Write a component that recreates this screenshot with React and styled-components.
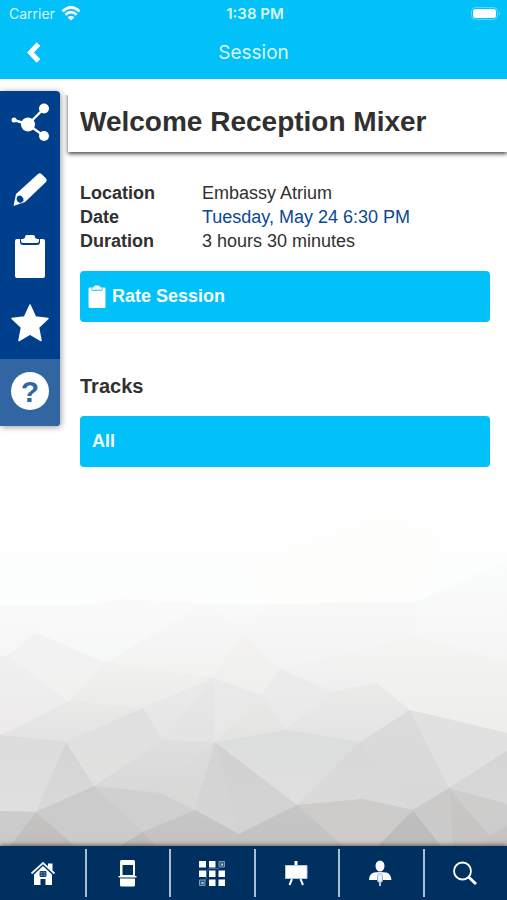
import styled, { createGlobalStyle } from "styled-components";

const DETAILS = [
  { label: "Location", value: "Embassy Atrium" },
  { label: "Date", value: "Tuesday, May 24 6:30 PM", href: "#schedule" },
  { label: "Duration", value: "3 hours 30 minutes" },
];

// [points, top colour, bottom colour]
const FACETS = [
  ["0,480 507,480 507,610 0,610", "#ffffff", "#fcfdfd"],
  ["0,605 507,605 507,846 0,846", "#f9f9f9", "#c8c8c8"],
  ["250,570 385,508 440,535 415,602 325,606 270,604", "#fefefd", "#fdfdfb"],
  ["0,611 60,611 36,633 8,655 0,661", "#faf9f9", "#f6f6f6"],
  ["60,611 120,599 205,603 106,663 36,633", "#fafafa", "#f6f7f7"],
  ["36,633 106,663 68,702 15,661 8,655", "#f3f3f3", "#f1f1f0"],
  ["205,603 243,633 213,678 106,663", "#f8f8f8", "#f2f2f1"],
  ["205,603 270,604 243,633", "#fafafa", "#f6f6f6"],
  ["270,604 415,602 415,637 332,657 280,669 243,633", "#f8f8f8", "#f3f3f3"],
  ["415,602 507,560 507,662 415,637", "#fbfcfc", "#f5f5f5"],
  ["415,637 507,662 507,733 410,710 376,683 332,657", "#f4f4f3", "#eeeeed"],
  ["415,657 507,700 507,733 410,710", "#f3f3f2", "#ededeb"],
  ["243,633 280,669 262,695 213,678", "#f4f3f2", "#efefee"],
  ["280,669 332,657 376,683 332,692", "#f3f3f2", "#efeff0"],
  ["0,655 15,661 68,702 0,736", "#f1f0f0", "#eceaeb"],
  ["106,663 213,678 143,708 68,702", "#f1f1f0", "#ebebea"],
  ["0,735 68,702 143,708 66,742", "#e9e9e8", "#e3e3e3"],
  ["143,708 213,678 163,740", "#ebeaea", "#e6e5e6"],
  ["213,678 215,742 163,740", "#e8e7e7", "#e4e3e4"],
  ["213,678 262,695 215,742", "#ebeaea", "#e7e7e6"],
  ["262,695 286,730 215,742", "#e9e9e8", "#e3e3e2"],
  ["280,669 332,692 286,730 262,695", "#ececec", "#eae9ea"],
  ["332,692 376,683 410,710 360,742 286,730", "#ebebea", "#e3e3e3"],
  ["0,735 66,742 36,812 0,811", "#dbdcdb", "#dfdfdf"],
  ["66,742 94,786 36,812", "#d5d4d4", "#dad9da"],
  ["66,742 143,708 163,740 94,786", "#dfe0df", "#e1e1e0"],
  ["94,786 163,740 215,742 160,793", "#e0dfe0", "#d9d8d9"],
  ["215,742 195,810 160,793", "#dcdcdc", "#d8d8d7"],
  ["215,742 239,834 195,810", "#d2d3d2", "#d5d5d5"],
  ["215,742 297,805 239,834", "#d0d1d0", "#d2d3d2"],
  ["215,742 286,730 360,742 297,805", "#dcdddd", "#dfdfdf"],
  ["360,742 413,810 363,799 297,805", "#d8d8d8", "#dadada"],
  ["360,742 410,710 449,788 413,810", "#dbdbdb", "#d9d8d8"],
  ["410,710 507,733 507,751 449,788", "#e1e1e0", "#e0e0e1"],
  ["449,788 507,751 507,804", "#d6d5d5", "#d9d8d8"],
  ["0,811 36,812 10,846 0,846", "#cdccce", "#cbcac9"],
  ["36,812 75,846 10,846", "#c5c4c3", "#bfbebd"],
  ["36,812 94,786 143,832 120,846 75,846", "#cccbcc", "#cbcbca"],
  ["94,786 160,793 195,810 143,832", "#d0d0d1", "#d1d0d1"],
  ["195,810 239,834 225,846 155,846 143,832", "#c7c6c6", "#c4c3c2"],
  ["143,832 155,846 120,846", "#bfbebd", "#bbbab9"],
  ["239,834 297,805 343,846 225,846", "#c7c6c6", "#c3c2c2"],
  ["297,805 363,799 413,810 378,846 343,846", "#cdcccb", "#cccbca"],
  ["413,810 441,846 378,846", "#c0bfbf", "#bcbbbb"],
  ["413,810 449,788 453,846 441,846", "#cbcac9", "#cccbcb"],
  ["449,788 490,836 480,846 453,846", "#c8c7c5", "#c5c4c3"],
  ["449,788 507,804 507,826 490,836", "#cfcecd", "#cdcccc"],
  ["490,836 507,826 507,846 480,846", "#c6c5c4", "#c2c1c0"],
];

const ShareShape = () => (
  <>
    <path d="M4 15l14 4.500L34 3.500M18 19.500L34 31" stroke="#fff" strokeWidth="2.400" fill="none" />
    <circle cx="18" cy="19.500" r="7" />
    <circle cx="34" cy="3.500" r="5" />
    <circle cx="34" cy="31" r="5" />
    <circle cx="4" cy="15" r="2.500" />
  </>
);

const PencilShape = () => (
  <>
    <path d="M6 22L28 2q2-1.500 3.500 0l4.500 4.500q1.500 2 0 3.500L15 30 3.500 34z" />
    <path d="M7.500 24q3-1 4.500.5 2 1.500 1.500 4.500l-3 2q-3.500-1-4-4z" fill="#003f8c" />
  </>
);

const ClipboardShape = () => (
  <>
    <path d="M7 0h3v3q0 3 3 3h14q3 0 3-3V0h3q2 0 2 2v35q0 2-2 2H7q-2 0-2-2V2q0-2 2-2z" />
    <path d="M11 0q4 0 4-2 0-2 2-2h6q2 0 2 2 0 2 4 2v2q0 2-2 2H13q-2 0-2-2z" />
  </>
);

const StarShape = () => (
  <path
    d="M20-1l5.500 12 12.500 1.500-9.500 9L31 34.500 20 28 9 34.500l2.500-13-9.500-9L14.500 11z"
    stroke="#fff"
    strokeWidth="1.500"
    strokeLinejoin="round"
  />
);

const HelpShape = () => (
  <>
    <circle cx="20" cy="18" r="19" />
    <QuestionMark x="20" y="29">
      ?
    </QuestionMark>
  </>
);

const RAIL = [
  { label: "Share", Icon: ShareShape },
  { label: "Notes", Icon: PencilShape },
  { label: "Survey", Icon: ClipboardShape },
  { label: "Favorite", Icon: StarShape },
  { label: "Help", Icon: HelpShape, active: true },
];

const TABS = [
  {
    label: "Home",
    icon: (
      <>
        <path d="M20 9V4.500h4.500V13z" />
        <path d="M3.500 14.500L15 4l11.500 10.500" fill="none" stroke="#e6f1fb" strokeWidth="1.800" />
        <path d="M15 7l9 8.500V26h-6.500v-6h-5v6H6V15.500z" />
        <path d="M12 12.500h6v5h-6zM15 12.500v5M12 15h6" fill="#5b7ea6" stroke="#003060" strokeWidth="0.800" />
      </>
    ),
  },
  {
    label: "Exhibitors",
    icon: (
      <>
        <path d="M8.500 1h12q1.500 0 1.500 1.500V17H7V2.500Q7 1 8.500 1zM9.500 6v10h10.500V6z" fillRule="evenodd" />
        <path d="M5.500 17h18v1.500h-18z" />
        <path d="M7 19.500h15V26q0 1.500-1.500 1.500h-12Q7 27.500 7 26z" />
      </>
    ),
  },
  {
    label: "Map",
    icon: (
      <>
        <path d="M22 9.500H12.500L9.500 12v7.500L7 21" fill="none" stroke="#4d7299" />
        <path d="M2 2h7v6.500H2zM12 2h6.500v6.500H12zM2 11.500h7V18H2zM12 11.500h6.500V18H12zM21.500 11.500H28V18h-6.500zM12 20.500h6.500V27H12zM21.500 20.500H28V27h-6.500z" />
        <path d="M22 2.500h5.500V8H22zM2.500 21h5.500v5.500H2.500z" fill="#315782" stroke="#7f9bb8" />
        <path d="M24 4.500h2v2h-2zM4.500 23h2v2h-2z" fill="#b8cbdd" />
      </>
    ),
  },
  {
    label: "Sessions",
    icon: (
      <>
        <path d="M12.500 2h3v4h-3z" />
        <path d="M3.500 6.500h21.500v13H3.500z" stroke="#b5c9dd" />
        <path d="M10 20l-2.500 6M18.500 20l2.500 6" stroke="#fff" strokeWidth="2" />
      </>
    ),
  },
  {
    label: "Speakers",
    icon: (
      <>
        <ellipse cx="14" cy="7" rx="4.500" ry="5.500" />
        <path d="M3 21q0-6 5-7.500 3-.5 6-.5t6.500.5Q25 15 25.500 21z" />
        <path d="M11.500 17q0-2.500 2.500-2.500t2.500 2.500v4q0 2.500-2.500 2.500T11.500 21z" fill="#e9f1f8" stroke="#9db5cc" />
        <path d="M13 23.500h2V27h-2z" fill="#b5c9dd" />
      </>
    ),
  },
  {
    label: "Search",
    icon: (
      <>
        <circle cx="11.500" cy="12" r="8.500" fill="none" stroke="#fff" strokeWidth="1.800" />
        <path d="M17.500 18L25 25" stroke="#fff" strokeWidth="3" />
      </>
    ),
  },
];

const Backdrop = () => (
  <BackdropSvg viewBox="0 480 507 366" preserveAspectRatio="none" aria-hidden="true">
    <defs>
      {FACETS.map(([, from, to], i) => (
        <linearGradient key={i} id={`facet-${i}`} x1="0" y1="0" x2="0" y2="1">
          <stop offset="0" stopColor={from} />
          <stop offset="1" stopColor={to} />
        </linearGradient>
      ))}
    </defs>
    {FACETS.map(([points], i) => (
      <polygon key={i} points={points} fill={`url(#facet-${i})`} />
    ))}
  </BackdropSvg>
);

const StatusBar = () => (
  <Status>
    <Carrier>
      Carrier
      <svg width="20" height="15" viewBox="0 0 18 14" fill="none" aria-hidden="true">
        <path d="M1 5q8-7.500 16 0M3.800 8.200q5.200-4.800 10.400 0" stroke="#fff" strokeWidth="2.400" />
        <path d="M5.800 10.500q3.200-2.500 6.400 0L9 13.500z" fill="#fff" />
      </svg>
    </Carrier>
    <Clock>1:38 PM</Clock>
    <Battery>
      <svg width="30" height="14" viewBox="0 0 30 14" aria-hidden="true">
        <rect x="0.500" y="0.500" width="26" height="12" rx="4" fill="none" stroke="#5cd7fa" />
        <rect x="2" y="2" width="23" height="9" rx="2.500" fill="#fff" />
        <path d="M28 4.500q2 2 0 4z" fill="#5cd7fa" />
      </svg>
    </Battery>
  </Status>
);

const App = () => {
  return (
    <Page>
      <GlobalStyle />
      <Header>
        <StatusBar />
        <NavBar>
          <BackButton type="button" aria-label="Back">
            <svg width="18" height="26" viewBox="0 0 18 26" aria-hidden="true">
              <path d="M13.500 4L5.500 12.500l8 8.500" fill="none" stroke="#fff" strokeWidth="5" />
            </svg>
          </BackButton>
          <NavTitle>Session</NavTitle>
        </NavBar>
      </Header>

      <Main>
        <Backdrop />
        <Rail aria-label="Session actions">
          {RAIL.map(({ label, Icon, active }) => (
            <RailButton key={label} type="button" aria-label={label} $active={active}>
              <svg width="48" height="48" viewBox="-4 -4 48 48" fill="#fff" aria-hidden="true">
                <Icon />
              </svg>
            </RailButton>
          ))}
        </Rail>
        <Content>
          <TitleCard>
            <Title>Welcome Reception Mixer</Title>
          </TitleCard>
          <Body>
            <Details>
              {DETAILS.map(({ label, value, href }) => (
                <DetailRow key={label}>
                  <dt>{label}</dt>
                  <dd>{href ? <a href={href}>{value}</a> : value}</dd>
                </DetailRow>
              ))}
            </Details>
            <ActionButton type="button" $icon>
              <svg width="18" height="24" viewBox="4 -5 32 46" preserveAspectRatio="none" fill="#fff" aria-hidden="true">
                <ClipboardShape />
              </svg>
              Rate Session
            </ActionButton>
            <SectionTitle>Tracks</SectionTitle>
            <ActionButton type="button">All</ActionButton>
          </Body>
        </Content>
      </Main>

      <TabBar>
        {TABS.map(({ label, icon }) => (
          <TabLink key={label} href={`#${label.toLowerCase()}`} aria-label={label}>
            <svg width="28" height="28" viewBox="0 0 28 28" fill="#fff" aria-hidden="true">
              {icon}
            </svg>
          </TabLink>
        ))}
      </TabBar>
    </Page>
  );
};

export default App;

const GlobalStyle = createGlobalStyle`
  * {
    box-sizing: border-box;
  }
  body {
    margin: 0;
    background: #fff;
    color: #303030;
    font-family: "Liberation Sans", Arial, sans-serif;
    font-size: 18px;
  }
  button {
    border: 0;
    padding: 0;
    font: inherit;
    cursor: pointer;
  }
  svg {
    display: block;
    flex-shrink: 0;
  }
`;

const Page = styled.div`
  display: flex;
  flex-direction: column;
  min-height: 100vh;
`;

const Header = styled.header`
  background: #02c0f8;
  color: #d8f6ff;
  font-family: Inter, sans-serif;
`;

const Status = styled.div`
  display: grid;
  grid-template-columns: 1fr auto 1fr;
  align-items: center;
  height: 27px;
  padding: 0 6px 0 9px;
  font-size: 14px;
`;

const Carrier = styled.div`
  display: flex;
  align-items: center;
  gap: 6px;
`;

const Clock = styled.time`
  font-weight: 600;
  font-size: 15px;
`;

const Battery = styled.div`
  justify-self: end;
`;

const NavBar = styled.div`
  display: grid;
  grid-template-columns: 68px 1fr 68px;
  align-items: center;
  height: 52px;
`;

const BackButton = styled.button`
  display: flex;
  justify-content: center;
  align-items: center;
  height: 52px;
  background: transparent;
`;

const NavTitle = styled.div`
  text-align: center;
  font-size: 19px;
  line-height: 24px;
`;

const Main = styled.main`
  display: flex;
  flex: 1;
  align-items: flex-start;
  gap: 8px;
  position: relative;
  padding: 12px 0 24px;
`;

const BackdropSvg = styled.svg`
  position: absolute;
  left: 0;
  bottom: 0;
  width: 100%;
  height: 366px;
`;

const Rail = styled.nav`
  display: flex;
  flex-direction: column;
  flex-shrink: 0;
  position: relative;
  width: 60px;
  overflow: hidden;
  border-radius: 0 4px 4px 0;
  background: #003f8c;
  box-shadow: 1px 1px 6px rgba(0, 0, 0, 0.4);
`;

const RailButton = styled.button`
  display: flex;
  justify-content: center;
  align-items: center;
  height: 67px;
  background: ${({ $active }) => ($active ? "#3266a2" : "transparent")};
`;

const QuestionMark = styled.text`
  fill: #3266a2;
  font-size: 30px;
  font-weight: 700;
  text-anchor: middle;
`;

const Content = styled.div`
  flex: 1;
  position: relative;
  min-width: 0;
`;

const TitleCard = styled.div`
  padding: 15px 12px 14px;
  background: #fff;
  box-shadow: 0 2px 4px rgba(0, 0, 0, 0.7);
  clip-path: inset(4px 0 -8px -4px);
`;

const Title = styled.h1`
  margin: 0;
  font-size: 28px;
  line-height: 32px;
`;

const Body = styled.div`
  padding: 29px 17px 0 12px;
`;

const Details = styled.dl`
  margin: 0 0 18px;
`;

const DetailRow = styled.div`
  display: grid;
  grid-template-columns: 122px 1fr;
  line-height: 24px;

  dt {
    font-weight: 700;
  }
  dd {
    margin: 0;
  }
  a {
    color: #0a4795;
    text-decoration: none;
  }
`;

const ActionButton = styled.button`
  display: flex;
  align-items: center;
  gap: 6px;
  width: 100%;
  height: 51px;
  padding: 0 ${({ $icon }) => ($icon ? "8px" : "12px")};
  border-radius: 4px;
  background: #02c0f8;
  color: #f2fcff;
  &&& {
    font-weight: 700;
  }
`;

const SectionTitle = styled.h2`
  margin: 52px 0 18px;
  font-size: 20px;
  line-height: 24px;
`;

const TabBar = styled.nav`
  display: grid;
  grid-template-columns: repeat(6, 1fr);
  position: relative;
  padding: 3px 0;
  background: #003060;
  box-shadow: 0 -1px 4px rgba(70, 45, 30, 0.7);
`;

const TabLink = styled.a`
  display: flex;
  justify-content: center;
  align-items: center;
  height: 48px;

  & + & {
    box-shadow: inset 2px 0 #a9bfd6;
  }
`;
